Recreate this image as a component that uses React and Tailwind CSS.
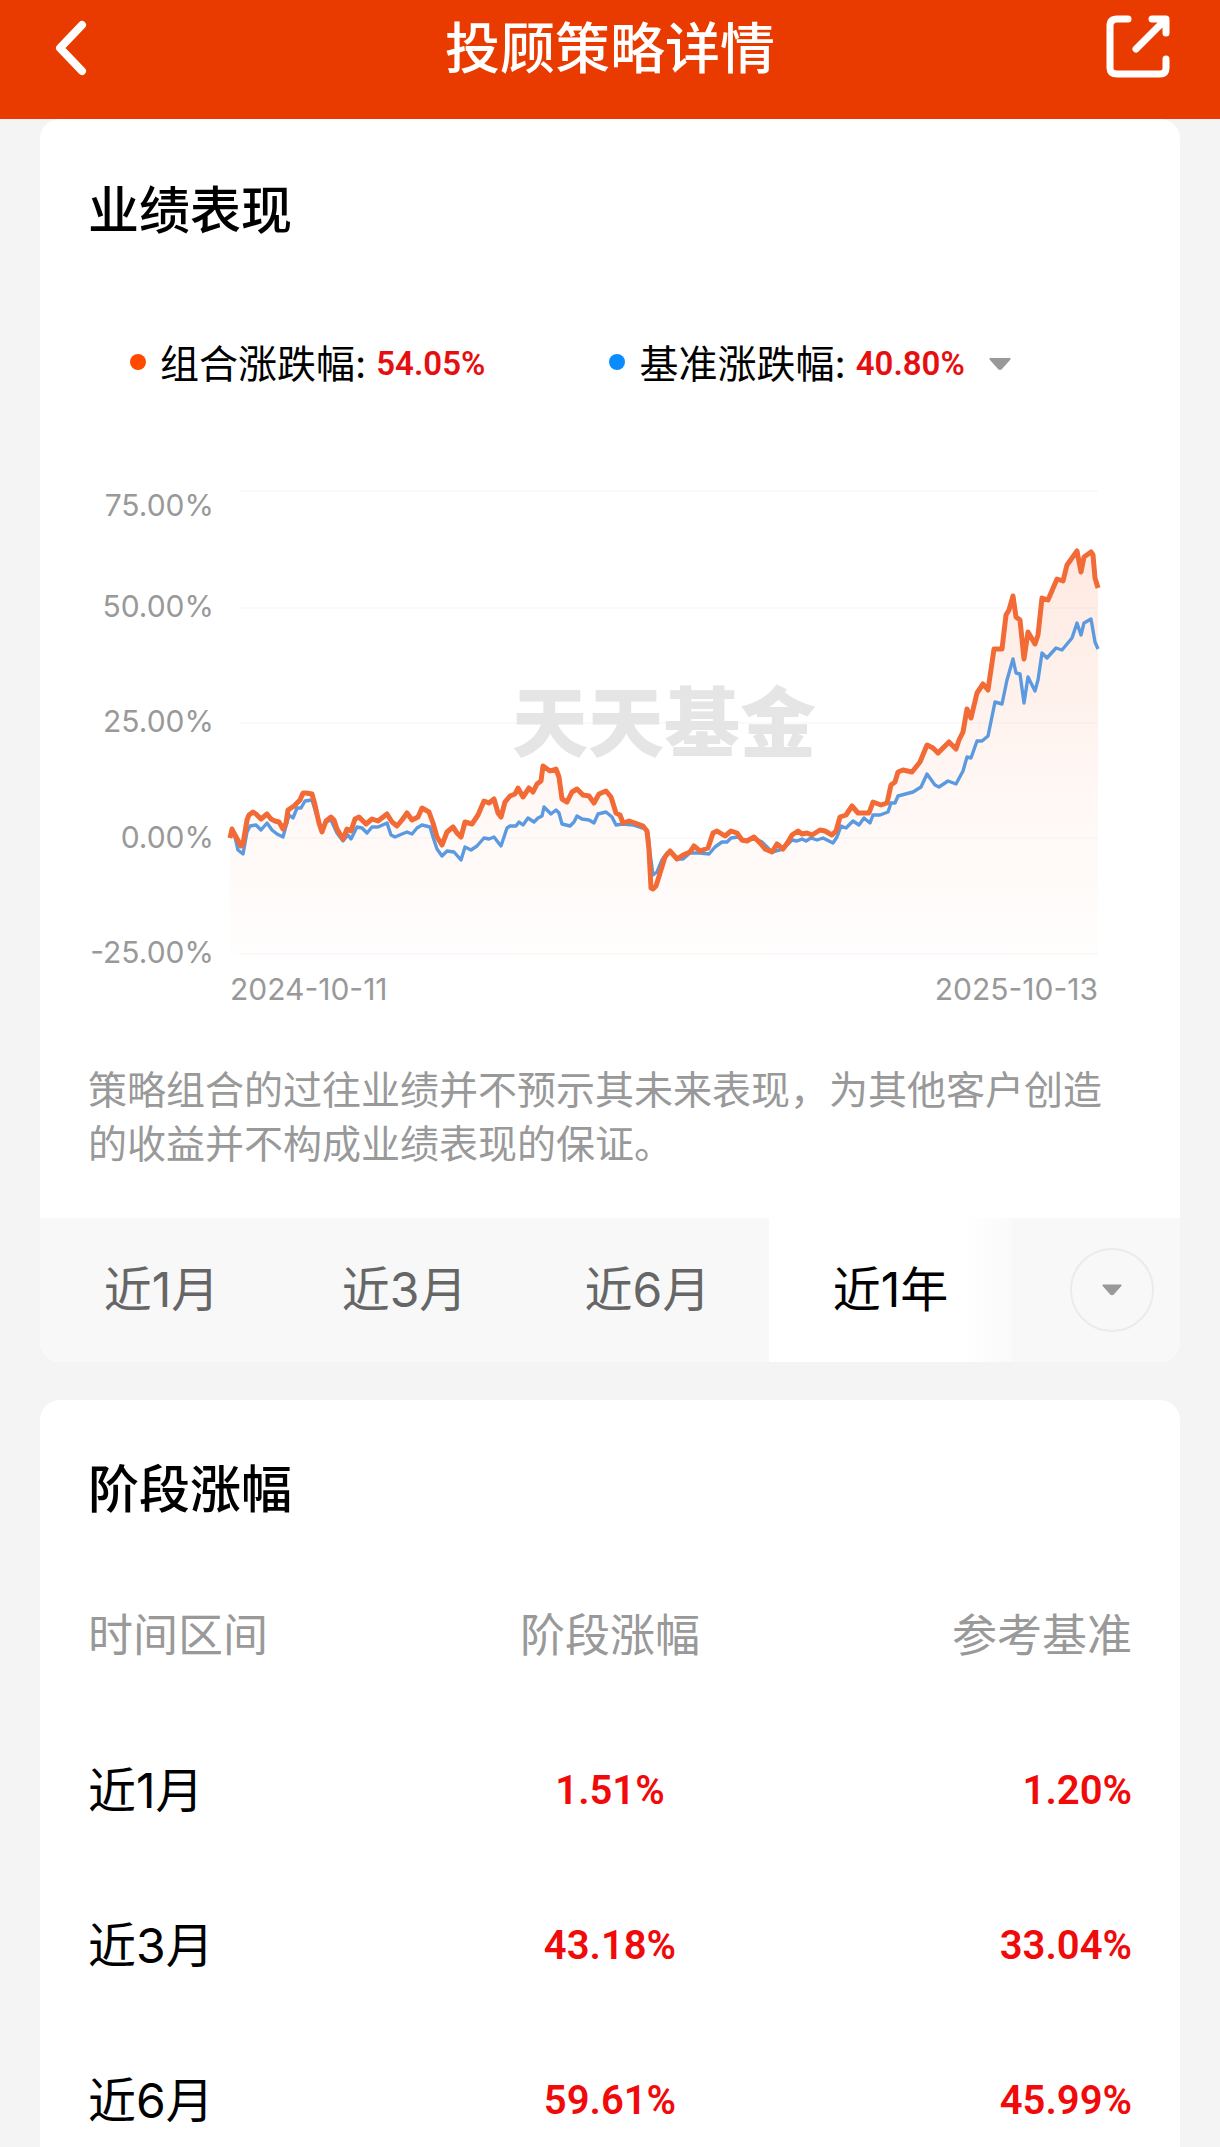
import React, { useState } from "react";

const numFont = "font-['Roboto',sans-serif] font-semibold ";

const periods = ["近1月", "近3月", "近6月", "近1年"];

const stages = [
  { name: "近1月", gain: "1.51%", base: "1.20%" },
  { name: "近3月", gain: "43.18%", base: "33.04%" },
  { name: "近6月", gain: "59.61%", base: "45.99%" },
];

const gridLines = [
  { label: "75.00%", y: 491, textY: 516 },
  { label: "50.00%", y: 608, textY: 617 },
  { label: "25.00%", y: 723, textY: 732 },
  { label: "0.00%", y: 838, textY: 848 },
  { label: "-25.00%", y: 954, textY: 963 },
];

const strategyLine =
  "230,838 232,829 235,835 241,846 243,844 247,820 249,815 253,812 256,814 261,819 267,814 271,819 275,821 279,822 283,829 286,823 288,810 294,806 300,800 303,793 306,793 312,794 315,805 319,823 322,832 326,821 331,817 334,820 337,829 343,839 347,829 351,831 355,819 359,817 366,824 372,819 378,821 387,814 392,822 397,826 402,820 407,813 412,820 418,817 422,808 429,812 433,823 437,837 442,845 447,832 453,827 457,833 461,837 465,822 472,824 478,815 484,801 489,803 494,799 498,813 501,817 505,802 510,796 515,794 518,788 523,797 529,788 533,792 537,784 541,781 543,766 550,771 556,769 559,777 562,799 567,802 572,792 577,789 583,795 589,796 594,803 599,794 606,791 611,797 616,813 620,815 623,823 629,821 635,823 643,826 647,831 649,850 651,888 653,889 656,886 661,870 665,857 670,851 677,859 683,855 690,852 694,846 700,851 708,848 713,833 717,831 725,836 731,831 737,833 742,840 747,841 754,837 760,843 765,849 772,852 777,844 783,849 788,842 792,835 798,831 802,834 807,833 812,835 820,830 825,831 832,835 836,831 840,817 846,815 852,806 858,813 869,813 873,802 881,805 887,803 891,785 895,782 898,772 903,770 912,772 920,762 927,745 933,748 938,753 949,742 956,749 959,740 963,732 967,709 971,718 977,693 983,684 988,690 994,649 1002,649 1006,615 1009,610 1013,596 1016,617 1020,620 1024,659 1028,632 1035,644 1038,635 1042,598 1048,600 1057,579 1063,581 1067,565 1077,551 1081,572 1084,557 1091,552 1093,555 1095,578 1098,588";

const benchmarkLine =
  "230,838 232,831 235,837 238,850 243,854 247,832 250,826 256,825 261,830 267,823 272,830 277,834 283,837 289,815 293,818 297,808 301,808 305,801 312,800 319,823 322,832 326,822 331,820 337,833 343,841 348,835 351,839 357,827 362,828 367,833 372,827 378,827 387,823 391,835 395,837 402,834 407,832 412,834 417,828 422,825 430,827 433,837 437,849 442,856 447,851 454,852 461,860 465,847 471,850 477,846 484,838 489,839 494,837 501,846 507,828 510,826 516,826 519,822 523,825 528,818 534,822 538,818 542,816 544,807 551,814 556,810 559,813 562,824 570,826 574,822 577,816 582,819 589,820 594,823 598,814 606,812 612,817 616,825 623,824 633,825 645,829 648,833 650,853 653,875 657,872 662,860 667,853 671,852 677,859 683,859 690,853 700,853 709,854 715,847 722,842 727,842 731,838 738,837 743,841 754,838 762,842 767,847 772,852 783,849 792,840 797,841 802,839 806,841 811,838 817,840 823,838 833,843 837,837 841,826 846,828 853,821 859,825 864,818 870,823 873,815 880,815 888,812 891,803 895,803 898,796 913,792 921,787 927,774 935,785 939,787 948,781 956,784 963,771 967,757 971,758 977,741 982,741 988,736 995,702 1002,704 1007,680 1013,659 1016,673 1020,674 1024,703 1028,677 1035,691 1038,680 1042,653 1047,658 1056,648 1062,650 1072,638 1077,623 1081,635 1084,623 1091,619 1095,642 1098,649";

const CaretDown = ({ className }) => (
  <svg viewBox="0 0 22 14" className={className} aria-hidden="true">
    <path d="M2 1h18a1 1 0 0 1 1 2l-8 9a3 3 0 0 1-4 0L1 3a1 1 0 0 1 1-2z" fill="#999999" />
  </svg>
);

const LegendItem = ({ dotCss, label, value }) => (
  <div className="flex items-center">
    <span className={"w-4 h-4 mr-[14px] -mt-1 rounded-full " + dotCss}></span>
    <span className="text-black">{label}:</span>
    <span className={numFont + "ml-[10px] text-[33px] text-[#e60f0f]"}>{value}</span>
  </div>
);

const PerformanceChart = () => (
  <svg viewBox="88 480 1044 530" className="block w-full mt-[88px]" role="img" aria-label="业绩走势">
    <defs>
      <linearGradient id="area" gradientUnits="userSpaceOnUse" x1="0" y1="550" x2="0" y2="954">
        <stop offset="0" stopColor="#f9622a" stopOpacity="0.14" />
        <stop offset="0.6" stopColor="#f9622a" stopOpacity="0.05" />
        <stop offset="1" stopColor="#f9622a" stopOpacity="0.01" />
      </linearGradient>
    </defs>
    {gridLines.map((line) => (
      <line key={line.label} x1="240" x2="1098" y1={line.y} y2={line.y} stroke="#fafafa" strokeWidth="2" />
    ))}
    <text
      x="664"
      y="751"
      textAnchor="middle"
      fill="#e5e5e5"
      className="font-['Noto_Sans_CJK_SC',sans-serif] font-black text-[76px]"
    >
      天天基金
    </text>
    <polygon points={"230,954 " + strategyLine + " 1098,954"} fill="url(#area)" />
    <polyline points={benchmarkLine} fill="none" stroke="#5b9ae0" strokeWidth="3.4" strokeLinejoin="round" />
    <polyline points={strategyLine} fill="none" stroke="#f26a35" strokeWidth="5" strokeLinejoin="round" />
    <g fill="#999999" className="font-['Inter',sans-serif] text-[30px]">
      {gridLines.map((line) => (
        <text key={line.label} x="214" y={line.textY} textAnchor="end">
          {line.label}
        </text>
      ))}
      <text x="230" y="1000">2024-10-11</text>
      <text x="1098" y="1000" textAnchor="end">2025-10-13</text>
    </g>
  </svg>
);

export default function App() {
  const [active, setActive] = useState("近1年");

  return (
    <div className="min-h-screen bg-[#f4f4f4] text-black font-['Inter','Noto_Sans_CJK_SC',sans-serif]">
      <header className="grid grid-cols-[1fr_auto_1fr] items-center h-[119px] pb-[26px] px-[50px] bg-[#e93a00] text-white">
        <button type="button" aria-label="返回" className="justify-self-start cursor-pointer">
          <svg viewBox="0 0 40 60" className="w-10 h-[60px]" fill="none" stroke="currentColor" strokeWidth="8" strokeLinecap="round" strokeLinejoin="round">
            <path d="M32 8 10 31l22 23" />
          </svg>
        </button>
        <h1 className="pt-[2px] text-[55px] leading-[72px] font-medium">投顾策略详情</h1>
        <button type="button" aria-label="分享" className="justify-self-end cursor-pointer">
          <svg viewBox="0 0 64 64" className="w-16 h-16" fill="none" stroke="currentColor" strokeWidth="7" strokeLinecap="round" strokeLinejoin="round">
            <path d="M22 4H11Q4 4 4 11v42q0 6 7 6h43q6 0 6-6V44" />
            <path d="M30 34 58 6M46 4h14v14" />
            <path d="M52 4h8v8z" fill="currentColor" strokeWidth="4" />
          </svg>
        </button>
      </header>

      <main className="px-10">
        <section className="bg-white rounded-[20px] overflow-hidden">
          <div className="px-12 pt-14 pb-[47px]">
            <h2 className="text-[51px] leading-[72px] font-medium">业绩表现</h2>
            <div className="flex items-center mt-[89px] pl-[42px] text-[39px] leading-[56px]">
              <LegendItem dotCss="bg-[#ff4a00]" label="组合涨跌幅" value="54.05%" />
              <div className="flex items-center ml-[124px]">
                <LegendItem dotCss="bg-[#0a8cff]" label="基准涨跌幅" value="40.80%" />
                <button type="button" aria-label="切换基准" className="ml-6 cursor-pointer">
                  <CaretDown className="w-[22px] h-[14px]" />
                </button>
              </div>
            </div>
            <PerformanceChart />
            <p className="mt-[53px] text-[39px] leading-[54px] text-[#999999]">
              策略组合的过往业绩并不预示其未来表现，为其他客户创造的收益并不构成业绩表现的保证。
            </p>
          </div>
          <div className="flex h-36 bg-[#f8f8f8]">
            {periods.map((item) => (
              <button
                key={item}
                type="button"
                onClick={() => setActive(item)}
                className={
                  "flex-1 text-[48px] leading-[60px] cursor-pointer " +
                  (active == item
                    ? "bg-linear-to-r from-white from-80% to-[#fafafa] text-black"
                    : "text-[#666666]")
                }
              >
                {item}
              </button>
            ))}
            <div className="flex items-center justify-end w-[168px] pr-[26px]">
              <button
                type="button"
                aria-label="更多区间"
                className="flex items-center justify-center w-[84px] h-[84px] rounded-full border-2 border-[#ebebeb] cursor-pointer"
              >
                <CaretDown className="w-5 h-[14px]" />
              </button>
            </div>
          </div>
        </section>

        <section className="mt-[38px] px-12 pt-[54px] pb-4 bg-white rounded-t-[20px]">
          <h2 className="text-[51px] leading-[72px] font-medium">阶段涨幅</h2>
          <table className="w-full mt-20 table-fixed text-[48px] leading-[60px]">
            <thead>
              <tr className="text-[45px] text-[#999999]">
                <th className="p-0 text-left font-normal">时间区间</th>
                <th className="p-0 text-center font-normal">阶段涨幅</th>
                <th className="p-0 text-right font-normal">参考基准</th>
              </tr>
            </thead>
            <tbody>
              {stages.map((row) => (
                <tr key={row.name}>
                  <td className="p-0 pt-[95px]">{row.name}</td>
                  <td className={numFont + "p-0 pt-[95px] text-center text-[40px] text-[#f00a0a]"}>{row.gain}</td>
                  <td className={numFont + "p-0 pt-[95px] text-right text-[40px] text-[#f00a0a]"}>{row.base}</td>
                </tr>
              ))}
            </tbody>
          </table>
        </section>
      </main>
    </div>
  );
}
